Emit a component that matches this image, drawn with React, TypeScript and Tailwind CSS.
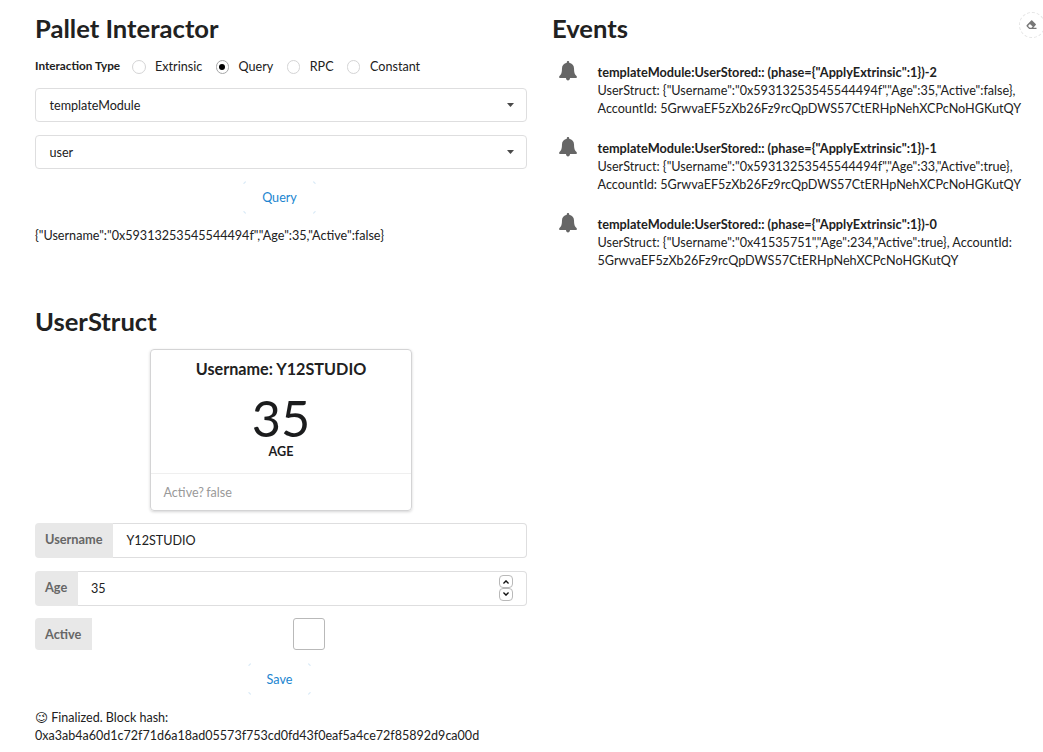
const interactionTypes = ["Extrinsic", "Query", "RPC", "Constant"];

const events = [
  {
    title: 'templateModule:UserStored:: (phase={"ApplyExtrinsic":1})-2',
    body: 'UserStruct: {"Username":"0x59313253545544494f","Age":35,"Active":false}, AccountId: 5GrwvaEF5zXb26Fz9rcQpDWS57CtERHpNehXCPcNoHGKutQY',
  },
  {
    title: 'templateModule:UserStored:: (phase={"ApplyExtrinsic":1})-1',
    body: 'UserStruct: {"Username":"0x59313253545544494f","Age":33,"Active":true}, AccountId: 5GrwvaEF5zXb26Fz9rcQpDWS57CtERHpNehXCPcNoHGKutQY',
  },
  {
    title: 'templateModule:UserStored:: (phase={"ApplyExtrinsic":1})-0',
    body: 'UserStruct: {"Username":"0x41535751","Age":234,"Active":true}, AccountId: 5GrwvaEF5zXb26Fz9rcQpDWS57CtERHpNehXCPcNoHGKutQY',
  },
];

function Radio({ label, checked }: { label: string; checked: boolean }) {
  return (
    <label className="flex items-center">
      <span
        className={`flex size-[13.5px] items-center justify-center rounded-full border ${
          checked ? "border-[#a6a7a8]" : "border-[#d4d4d5]"
        }`}
      >
        {checked && <span className="size-[6px] rounded-full bg-black" />}
      </span>
      <span className="ml-[9.5px]">{label}</span>
    </label>
  );
}

function Dropdown({ value }: { value: string }) {
  return (
    <div className="flex h-[34px] items-center justify-between rounded-[4px] border border-[#dededf] pr-[12px] pl-[13.5px]">
      <span className="pt-px">{value}</span>
      <svg width="7" height="4" viewBox="0 0 7 4" fill="#4a4a4a">
        <path d="M0 0h7L3.5 4z" />
      </svg>
    </div>
  );
}

function GhostButton({ label, className }: { label: string; className: string }) {
  return (
    <button className={`relative flex items-center justify-center text-[#2185d0] ${className}`}>
      <span className="absolute inset-0 rounded-[4px] border border-[#d3e7f6]" />
      <span className="absolute inset-x-[3px] inset-y-0 bg-white" />
      <span className="absolute inset-x-0 inset-y-[3px] bg-white" />
      <span className="relative">{label}</span>
    </button>
  );
}

function Chevron({ up }: { up?: boolean }) {
  return (
    <span
      className={`flex h-[13px] w-[14px] justify-center rounded-[4px] border border-[#b9b9b9] ${
        up ? "items-center" : "items-start pt-[3px]"
      }`}
    >
      <svg width="6" height="4" viewBox="0 0 6 4" fill="none" stroke="#111" strokeWidth="1.4">
        <path d={up ? "M.4 3.5 3 .9l2.6 2.6" : "M.4.5 3 3.1 5.6.5"} />
      </svg>
    </span>
  );
}

function BellIcon() {
  return (
    <svg className="ml-[6.5px] shrink-0" width="18" height="20" viewBox="0 0 18 20" fill="#666">
      <path d="M9 0c.7 0 1.2.5 1.2 1.2v.6c2.9.5 4.8 2.7 4.8 5.4 0 4.2.7 6.2 2.5 7.900.7.7.4 2-.7 2H11c0 1.500-.9 2.300-2 2.300s-2-.8-2-2.300H1.200c-1.100 0-1.400-1.300-.7-2 1.800-1.700 2.500-3.700 2.500-7.900 0-2.700 1.900-4.900 4.800-5.400v-.6C7.800.5 8.300 0 9 0z" />
    </svg>
  );
}

function EraserIcon() {
  return (
    <svg className="mr-px" width="11" height="10" viewBox="0 0 11 10">
      <path
        d="M6.200.4 9.700 3.900c.4.4.4.8 0 1.200L7.300 7.700H10.500V9H3.200L.8 6.600c-.5-.5-.5-1 0-1.500L5.200.4c.3-.3.700-.3 1 0zM3.900 3.900 2 5.900l1.800 1.800h1.700l1.200-1.200z"
        fill="#777"
        fillRule="evenodd"
      />
    </svg>
  );
}

export default function App() {
  return (
    <div className="flex h-[752px] w-[1043px] overflow-hidden bg-white pl-[35px] font-['Lato',sans-serif] text-[12.6px] leading-[18px] text-[#212121]">
      <main className="w-[492px] shrink-0">
        <h1 className="mt-[12px] text-[25.6px] leading-[32px] font-bold">Pallet Interactor</h1>
        <div className="mt-[14px] flex h-[18px] items-center">
          <span className="w-[97px] pb-[2px] text-[11.75px] font-bold">Interaction Type</span>
          <div className="flex gap-[13.4px]">
            {interactionTypes.map((type) => (
              <Radio key={type} label={type} checked={type === "Query"} />
            ))}
          </div>
        </div>
        <div className="mt-[12px] flex flex-col gap-[13px]">
          <Dropdown value="templateModule" />
          <Dropdown value="user" />
        </div>
        <div className="mt-[12px] flex justify-center">
          <GhostButton label="Query" className="mr-[3px] h-[33px] w-[73px]" />
        </div>
        <p className="mt-[13px]">{'{"Username":"0x59313253545544494f","Age":35,"Active":false}'}</p>

        <h1 className="mt-[60px] text-[25.6px] leading-[32px] font-bold">UserStruct</h1>
        <section className="mx-auto mt-[12px] h-[162px] w-[262px] rounded-[4px] border border-[#d4d4d5] shadow-[0_1px_3px_0_#d4d4d5]">
          <div className="flex h-[124px] flex-col items-center border-b border-[#efefef] pt-[9px]">
            <h2 className="text-[16.2px] leading-[20px] font-bold">Username: Y12STUDIO</h2>
            <div className="mt-[14px] text-[50.4px] leading-[50px] text-[#1b1c1d]">35</div>
            <div className="text-[12.6px] leading-[18px] font-bold text-[#1b1c1d]">AGE</div>
          </div>
          <p className="mt-[10px] pl-[12.5px] text-[#999999] [word-spacing:-1px]">Active? false</p>
        </section>

        <div className="mt-[12px] flex h-[35px]">
          <span className="w-[78px] rounded-l-[4px] bg-[#e8e8e8] pt-[7px] pl-[10px] text-[12.75px] font-bold text-[#666]">Username</span>
          <span className="flex-1 rounded-r-[4px] border border-l-0 border-[#dededf] pt-[8px] pl-[13.5px]">Y12STUDIO</span>
        </div>
        <div className="mt-[13px] flex h-[35px]">
          <span className="w-[43px] rounded-l-[4px] bg-[#e8e8e8] pt-[7px] pl-[10px] text-[12.75px] font-bold text-[#666]">Age</span>
          <div className="flex flex-1 justify-between rounded-r-[4px] border border-l-0 border-[#dededf] pr-[13px] pl-[13px]">
            <span className="pt-[8px]">35</span>
            <div className="flex flex-col pt-[3px]">
              <Chevron up />
              <Chevron />
            </div>
          </div>
        </div>
        <div className="mt-[12px] flex h-[32px]">
          <span className="w-[57px] rounded-l-[4px] bg-[#e8e8e8] pt-[7px] pl-[10px] text-[12.75px] font-bold text-[#666]">Active</span>
          <span className="ml-[201px] size-[32px] rounded-[3px] border border-[#b9b9b9]" />
        </div>
        <div className="mt-[13px] flex justify-center">
          <GhostButton label="Save" className="mr-[3px] h-[32px] w-[63px] pt-px" />
        </div>
        <p className="mt-[14px] font-['Lato','DejaVu_Sans',sans-serif] text-[12.54px]">😉&#xFE0E; Finalized. Block hash:</p>
        <p className="text-[12.54px]">0xa3ab4a60d1c72f71d6a18ad05573f753cd0fd43f0eaf5a4ce72f85892d9ca00d</p>
      </main>

      <aside className="ml-[25px] w-[493px] shrink-0">
        <div className="flex justify-between">
          <h1 className="mt-[12px] text-[25.6px] leading-[32px] font-bold">Events</h1>
          <button className="mt-[12px] flex size-[26px] items-center justify-center rounded-full border border-dashed border-[#e4e4e4]">
            <EraserIcon />
          </button>
        </div>
        <div className="mt-[17px] flex flex-col gap-[22px]">
          {events.map((event) => (
            <article key={event.title} className="flex">
              <BellIcon />
              <div className="mt-[2px] -mb-[2px] ml-[21px] w-[435px]">
                <div className="text-[12.72px] font-bold">{event.title}</div>
                <div className="translate-y-px text-[12.64px]">{event.body}</div>
              </div>
            </article>
          ))}
        </div>
      </aside>
    </div>
  );
}
